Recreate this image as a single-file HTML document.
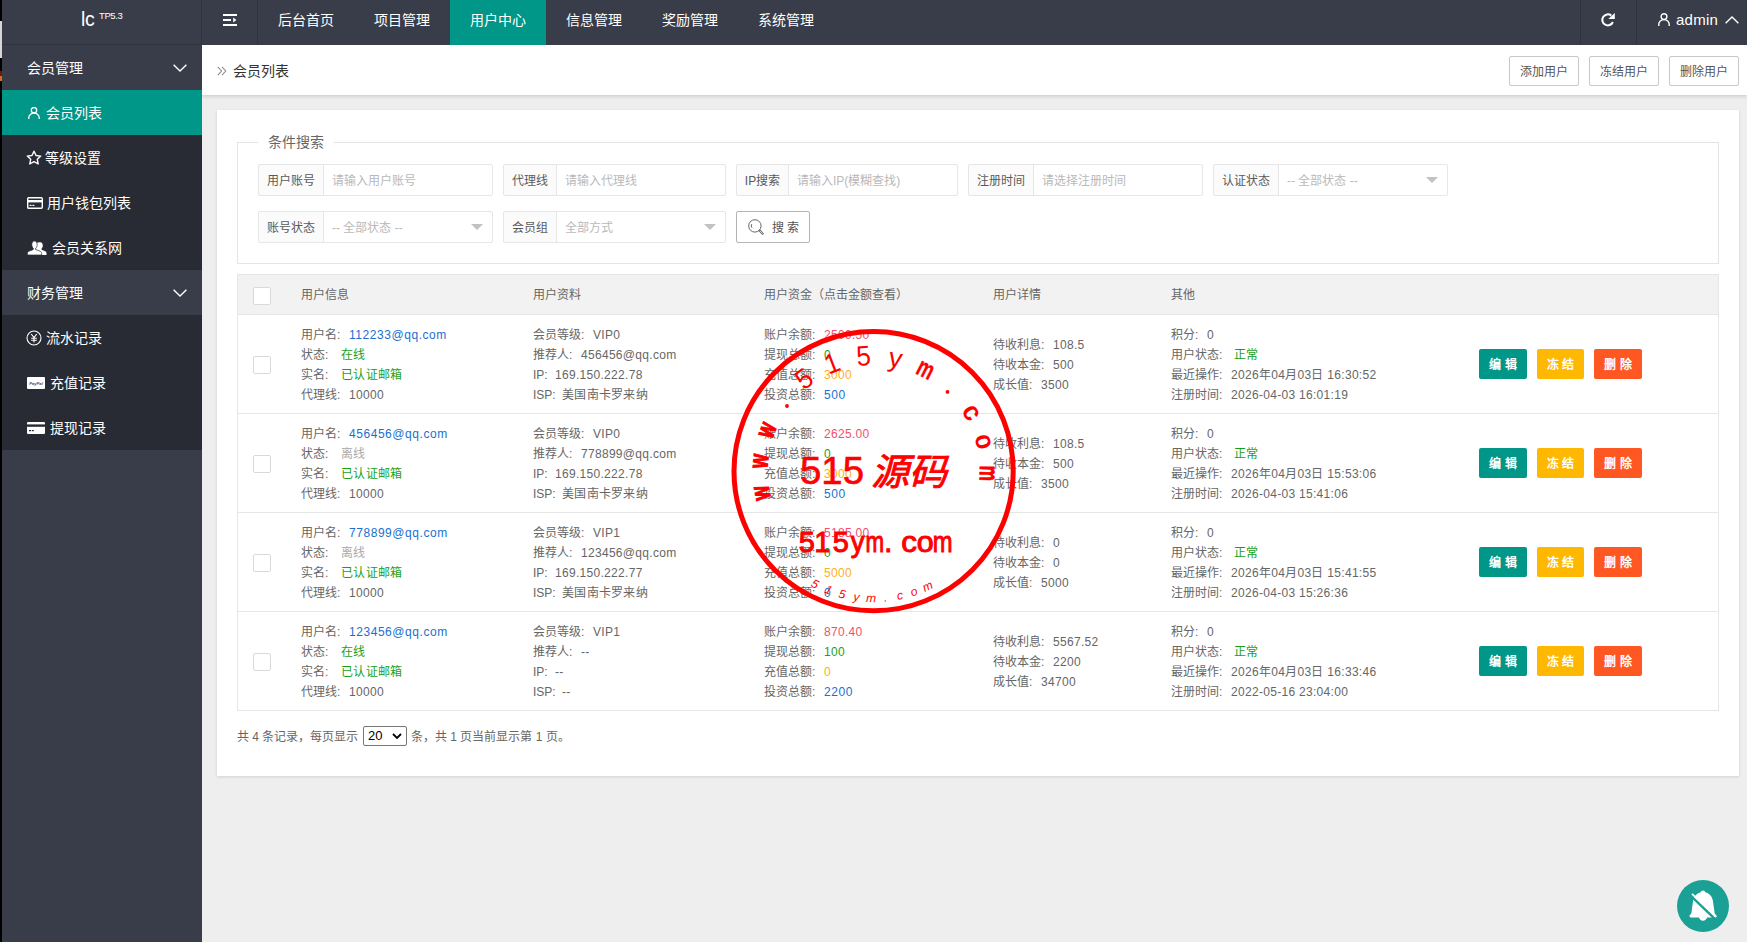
<!DOCTYPE html>
<html lang="zh-CN">
<head>
<meta charset="utf-8">
<title>会员列表</title>
<style>
*{box-sizing:border-box;margin:0;padding:0}
html,body{width:1747px;height:942px;overflow:hidden}
body{position:relative;background:#eeeeee;font-family:"Liberation Sans",sans-serif;font-size:12px;color:#666;line-height:20px}
.abs{position:absolute}
svg{display:block}
/* left window strip */
#strip{left:0;top:0;width:2px;height:942px;background:#000;z-index:50}
#strip i{position:absolute;left:0;width:2px;display:block}
/* header */
#hdr{left:0;top:0;width:1747px;height:45px;background:#393d49;color:#fff;z-index:10}
#logo{left:0;top:0;width:202px;height:45px;border-bottom:1px solid #30333d}
#logo .lc{position:absolute;left:81px;top:8.4px;font-size:19.400px;line-height:22px;color:#fff;letter-spacing:-.3px}
#logo .tp{position:absolute;left:99px;top:9.800px;font-size:9.500px;line-height:12px;color:#fff;letter-spacing:-.4px}
.vline{position:absolute;top:0;width:1px;height:45px;background:#30333d}
.nav{position:absolute;top:0;height:45px;width:96px;line-height:40px;font-size:14px;color:#fff;padding-left:20px;white-space:nowrap}
.nav.on{background:#009688}
#adm{left:1676px;top:9px;font-size:15px;line-height:22px;color:#fff;letter-spacing:.25px}
/* sidebar */
#side{left:0;top:45px;width:202px;height:897px;background:#393d49;z-index:9}
.sh{position:absolute;left:0;width:202px;height:45px;line-height:46px;font-size:14px;color:#fff;padding-left:27px;background:#393d49;white-space:nowrap}
.sub{position:absolute;left:0;width:202px;background:#282b33}
.si{position:absolute;left:0;width:202px;height:45px;line-height:46px;font-size:14px;color:#fff;white-space:nowrap}
.si.on{background:#009688}
.si span{position:absolute;top:0}
.si svg,.sh svg{position:absolute}
/* breadcrumb */
#crumb{left:202px;top:45px;width:1545px;height:50px;background:#fff;box-shadow:0 1px 4px rgba(0,0,0,.18);z-index:5}
#crumb .t{position:absolute;left:31px;top:15px;font-size:14px;line-height:22px;color:#333;white-space:nowrap}
.tb{position:absolute;top:11px;width:70px;height:30px;border:1px solid #c9c9c9;border-radius:2px;background:#fff;font-size:12px;line-height:30px;color:#555;text-align:center;white-space:nowrap}
/* card */
#card{left:217px;top:110px;width:1522px;height:666px;background:#fff;box-shadow:0 1px 3px rgba(0,0,0,.12);z-index:2}
#fs{left:20px;top:32px;width:1482px;height:122px;border:1px solid #e4e4e4}
#lg{left:41px;top:21px;width:76px;height:22px;background:#fff;font-size:14px;line-height:22px;color:#666;text-align:center;white-space:nowrap}
.grp{height:32px;border:1px solid #e6e6e6;border-radius:2px;background:#fff;overflow:hidden}
.gl{position:absolute;left:-1px;top:-1px;height:32px;border:1px solid #e6e6e6;border-radius:2px 0 0 2px;background:#fbfbfb;color:#5a5a5a;font-size:12px;line-height:32px;text-align:center;white-space:nowrap;overflow:hidden}
.gi{position:absolute;top:0;margin-left:7px;height:30px;line-height:33px;font-size:12px;color:#b9b9b9;white-space:nowrap}
.ar{position:absolute;right:9px;top:12px;width:0;height:0;border:6px solid transparent;border-top-color:#c2c2c2;border-bottom-width:0}
#sb{width:74px;height:32px;border:1px solid #b4b4b4;border-radius:2px;background:#fff;color:#555;font-size:12px;line-height:30px;white-space:nowrap}
#sb span{position:absolute;left:35px;top:1.4px}
#tb{width:1482px;border:1px solid #e6e6e6;border-bottom:0;background:#fff}
#th{position:relative;height:40px;background:#f2f2f2;border-bottom:1px solid #e6e6e6;color:#666;font-size:12px;line-height:40px}
#th span{position:absolute;top:0;white-space:nowrap}
.cb{position:absolute;display:block;width:18px;height:18px;border:1px solid #d9d9d9;border-radius:2px;background:#fff}
.tr{position:relative;height:99px;border-bottom:1px solid #e6e6e6}
.c{position:absolute;font-size:12px;line-height:20px;color:#666;white-space:nowrap}
.l{display:inline-block;font-weight:normal;white-space:nowrap}
.v{letter-spacing:.3px}.v.b{letter-spacing:.55px}
.v.b{color:#1a6fd0}.v.g{color:#1a9f1a}.v.x{color:#aaa}.v.r{color:#f0506e}.v.o{color:#ffb019}
.bt{position:absolute;top:34px;width:48px;height:30px;border-radius:2px;color:#fff;font-size:12px;font-weight:bold;line-height:32px;text-align:center;white-space:nowrap}
#pg{font-size:12px;line-height:20px;color:#666;white-space:nowrap;height:20px;width:400px}
#pg .p{position:absolute;top:0;white-space:nowrap}
#sel{display:block;position:absolute;left:126px;top:-1px;width:44px;height:20px;border:1px solid #767676;border-radius:2px;background:#fff;color:#000;font-size:13px;line-height:18px;padding-left:4px;text-align:left}
#sel svg{position:absolute;right:4px;top:6px}
</style>
</head>
<body>
<div id="strip" class="abs"><i style="top:21px;height:37px;background:#d6d6d6"></i><i style="top:71px;height:5px;background:#7a1010"></i><i style="top:76px;height:5px;background:#c8741c"></i></div>

<div id="hdr" class="abs">
  <div id="logo" class="abs"><span class="lc">lc</span><span class="tp">TP5.3</span></div>
  <div class="vline" style="left:201px"></div>
  <svg class="abs" style="left:223px;top:14px" width="14" height="12" viewBox="0 0 14 12"><path d="M0 1h14M0 6h8M0 11h14" stroke="#fff" stroke-width="1.8" fill="none"/><path d="M10.2 3.6L13.4 6l-3.2 2.4z" fill="#fff"/></svg>
  <div class="vline" style="left:257px"></div>
  <div class="nav" style="left:258px">后台首页</div>
  <div class="nav" style="left:354px">项目管理</div>
  <div class="nav on" style="left:450px">用户中心</div>
  <div class="nav" style="left:546px">信息管理</div>
  <div class="nav" style="left:642px">奖励管理</div>
  <div class="nav" style="left:738px">系统管理</div>
  <div class="vline" style="left:1580px"></div>
  <svg class="abs" style="left:1600px;top:12px" width="16" height="16" viewBox="0 0 16 16"><path d="M11.3 3.6A5.5 5.5 0 1 0 12.9 10" stroke="#fff" stroke-width="2" fill="none"/><path d="M14.8 1.1V7.100H8.300z" fill="#fff"/></svg>
  <div class="vline" style="left:1636px"></div>
  <svg class="abs" style="left:1658px;top:13px" width="12" height="13" viewBox="0 0 12 13"><circle cx="6" cy="3.6" r="2.9" stroke="#fff" stroke-width="1.4" fill="none"/><path d="M0.8 13V11.2A5.2 4.6 0 0 1 11.2 11.2V13" stroke="#fff" stroke-width="1.4" fill="none"/></svg>
  <div id="adm" class="abs">admin</div>
  <svg class="abs" style="left:1725px;top:16px" width="14" height="8" viewBox="0 0 14 8"><path d="M0.6 7.2L7 1l6.4 6.2" stroke="#fff" stroke-width="1.4" fill="none"/></svg>
</div>

<div id="side" class="abs">
  <div class="sh" style="top:0">会员管理<svg style="left:173px;top:19px" width="14" height="8" viewBox="0 0 14 8"><path d="M0.6 0.8L7 7l6.4-6.2" stroke="#fff" stroke-width="1.4" fill="none"/></svg></div>
  <div class="sub" style="top:45px;height:180px">
    <div class="si on" style="top:0"><svg style="left:28px;top:17px" width="12" height="12" viewBox="0 0 12 12"><circle cx="6" cy="3.3" r="2.7" stroke="#fff" stroke-width="1.3" fill="none"/><path d="M0.8 12V10.6A5.2 4.4 0 0 1 11.2 10.6V12" stroke="#fff" stroke-width="1.3" fill="none"/></svg><span style="left:46px">会员列表</span></div>
    <div class="si" style="top:45px"><svg style="left:26px;top:15px" width="16" height="15" viewBox="0 0 16 15"><path d="M8 1.2l2.05 4.3 4.7.6-3.45 3.25.9 4.65L8 11.7l-4.2 2.3.9-4.65L1.25 6.1l4.7-.6z" stroke="#fff" stroke-width="1.4" stroke-linejoin="round" fill="none"/></svg><span style="left:45px">等级设置</span></div>
    <div class="si" style="top:90px"><svg style="left:27px;top:17px" width="16" height="12" viewBox="0 0 16 12"><rect x="0.7" y="0.7" width="14.6" height="10.6" rx="1" stroke="#fff" stroke-width="1.4" fill="none"/><rect x="0.7" y="3" width="14.6" height="2.4" fill="#fff"/><rect x="2.6" y="7.8" width="2" height="1.2" fill="#fff"/><rect x="5.4" y="7.8" width="2" height="1.2" fill="#fff"/></svg><span style="left:47px">用户钱包列表</span></div>
    <div class="si" style="top:135px"><svg style="left:27px;top:15px" width="20" height="16" viewBox="0 0 20 16"><path d="M13.4 2.2c1.5 0 2.4 1.3 2.4 3.2 0 1.300-.5 2.500-1.200 3.200v1.200l3.500 1.500c.9.400 1.400 1.100 1.400 2v1.700H9V3c1-.5 2.800-.8 4.400-.8z" fill="#fff"/><path d="M7.400 1c1.700 0 2.800 1.500 2.800 3.600 0 1.500-.6 2.900-1.500 3.700v1.200l4.300 1.700c1 .4 1.600 1.200 1.600 2.200V15H.4v-1.600c0-1 .6-1.800 1.600-2.200l4.300-1.700V8.300C5.400 7.500 4.800 6.100 4.800 4.600 4.800 2.500 5.800 1 7.400 1z" fill="#fff" stroke="#282b33" stroke-width=".7"/></svg><span style="left:52px">会员关系网</span></div>
  </div>
  <div class="sh" style="top:225px">财务管理<svg style="left:173px;top:19px" width="14" height="8" viewBox="0 0 14 8"><path d="M0.6 0.8L7 7l6.4-6.2" stroke="#fff" stroke-width="1.4" fill="none"/></svg></div>
  <div class="sub" style="top:270px;height:135px">
    <div class="si" style="top:0"><svg style="left:26px;top:15px" width="16" height="16" viewBox="0 0 16 16"><circle cx="8" cy="8" r="7" stroke="#fff" stroke-width="1.1" fill="none"/><path d="M5.2 4L8 7.6 10.8 4M8 7.6V12.4M5.2 8.2h5.6M5.2 10.2h5.6" stroke="#fff" stroke-width="1.1" fill="none"/></svg><span style="left:46px">流水记录</span></div>
    <div class="si" style="top:45px"><svg style="left:27px;top:17px" width="18" height="12" viewBox="0 0 18 12"><rect width="18" height="12" rx="1" fill="#fff"/><text x="9" y="7.6" font-family="Liberation Sans, sans-serif" font-size="4.2" font-style="italic" font-weight="bold" fill="#3a4a8c" text-anchor="middle">PayPal</text></svg><span style="left:50px">充值记录</span></div>
    <div class="si" style="top:90px"><svg style="left:27px;top:17px" width="18" height="12" viewBox="0 0 18 12"><rect width="18" height="12" rx="1" fill="#fff"/><rect x="0" y="2.4" width="18" height="2.4" fill="#282b33"/><rect x="2" y="8" width="2" height="1.2" fill="#282b33"/><rect x="4.8" y="8" width="2" height="1.2" fill="#282b33"/></svg><span style="left:50px">提现记录</span></div>
  </div>
</div>

<div id="crumb" class="abs">
  <svg class="abs" style="left:15px;top:21px" width="10" height="10" viewBox="0 0 10 10"><path d="M0.800 0.800L4.600 5 0.800 9.200M5 0.800L8.800 5 5 9.200" stroke="#8c8c8c" stroke-width="1.100" fill="none"/></svg>
  <div class="t">会员列表</div>
  <div class="tb" style="left:1307px">添加用户</div>
  <div class="tb" style="left:1387px">冻结用户</div>
  <div class="tb" style="left:1467px">删除用户</div>
</div>

<!--CARD-START-->
<div id="card" class="abs">
<div id="fs" class="abs"></div><div id="lg" class="abs">条件搜索</div>
<div class="grp abs" style="left:41px;top:54px;width:235px"><div class="gl" style="width:66px">用户账号</div><div class="gi" style="left:66px">请输入用户账号</div></div>
<div class="grp abs" style="left:286px;top:54px;width:223px"><div class="gl" style="width:54px">代理线</div><div class="gi" style="left:54px">请输入代理线</div></div>
<div class="grp abs" style="left:519px;top:54px;width:222px"><div class="gl" style="width:53px">IP搜索</div><div class="gi" style="left:53px">请输入IP(模糊查找)</div></div>
<div class="grp abs" style="left:751px;top:54px;width:235px"><div class="gl" style="width:66px">注册时间</div><div class="gi" style="left:66px">请选择注册时间</div></div>
<div class="grp abs" style="left:996px;top:54px;width:235px"><div class="gl" style="width:66px">认证状态</div><div class="gi" style="left:66px">-- 全部状态 --</div><i class="ar"></i></div>
<div class="grp abs" style="left:41px;top:101px;width:235px"><div class="gl" style="width:66px">账号状态</div><div class="gi" style="left:66px">-- 全部状态 --</div><i class="ar"></i></div>
<div class="grp abs" style="left:286px;top:101px;width:223px"><div class="gl" style="width:54px">会员组</div><div class="gi" style="left:54px">全部方式</div><i class="ar"></i></div>
<div id="sb" class="abs" style="left:519px;top:101px"><svg width="17" height="17" viewBox="0 0 17 17" style="position:absolute;left:11px;top:6.5px"><circle cx="6.9" cy="6.9" r="6.2" stroke="#666" stroke-width="1" fill="none"/><path d="M3.6 5.2A3.4 3.4 0 0 0 3.9 8.6" stroke="#666" stroke-width="1" fill="none"/><path d="M11.6 11.6l3 3.100" stroke="#666" stroke-width="2.200" stroke-linecap="round" fill="none"/><path d="M12 12l2.400 2.500" stroke="#fff" stroke-width=".7" stroke-linecap="round" fill="none"/></svg><span>搜 索</span></div>
<div id="tb" class="abs" style="left:20px;top:164px">
<div id="th"><i class="cb" style="left:15px;top:12px"></i><span style="left:63px">用户信息</span><span style="left:295px">用户资料</span><span style="left:526px">用户资金（点击金额查看）</span><span style="left:755px">用户详情</span><span style="left:933px">其他</span></div>
<div class="tr"><i class="cb" style="left:15px;top:41px"></i>
<div class="c" style="left:63px;top:10px"><b class="l" style="width:48px">用户名:</b><span class="v b">112233@qq.com</span><br><b class="l" style="width:40px">状态:</b><span class="v g">在线</span><br><b class="l" style="width:40px">实名:</b><span class="v g">已认证邮箱</span><br><b class="l" style="width:48px">代理线:</b><span class="v">10000</span></div>
<div class="c" style="left:295px;top:10px"><b class="l" style="width:60px">会员等级:</b><span class="v">VIP0</span><br><b class="l" style="width:48px">推荐人:</b><span class="v">456456@qq.com</span><br><b class="l" style="width:22px">IP:</b><span class="v">169.150.222.78</span><br><b class="l" style="width:29px">ISP:</b><span class="v">美国南卡罗来纳</span></div>
<div class="c" style="left:526px;top:10px"><b class="l" style="width:60px">账户余额:</b><span class="v r">2509.50</span><br><b class="l" style="width:60px">提现总额:</b><span class="v g">0</span><br><b class="l" style="width:60px">充值总额:</b><span class="v o">3000</span><br><b class="l" style="width:60px">投资总额:</b><span class="v b">500</span></div>
<div class="c" style="left:755px;top:20px"><b class="l" style="width:60px">待收利息:</b><span class="v">108.5</span><br><b class="l" style="width:60px">待收本金:</b><span class="v">500</span><br><b class="l" style="width:48px">成长值:</b><span class="v">3500</span></div>
<div class="c" style="left:933px;top:10px"><b class="l" style="width:36px">积分:</b><span class="v">0</span><br><b class="l" style="width:63px">用户状态:</b><span class="v g">正常</span><br><b class="l" style="width:60px">最近操作:</b><span class="v">2026年04月03日 16:30:52</span><br><b class="l" style="width:60px">注册时间:</b><span class="v">2026-04-03 16:01:19</span></div>
<div class="bt" style="left:1241px;background:#009688">编 辑</div><div class="bt" style="left:1299px;width:47px;background:#ffb800">冻 结</div><div class="bt" style="left:1356px;background:#ff5722">删 除</div>
</div>
<div class="tr"><i class="cb" style="left:15px;top:41px"></i>
<div class="c" style="left:63px;top:10px"><b class="l" style="width:48px">用户名:</b><span class="v b">456456@qq.com</span><br><b class="l" style="width:40px">状态:</b><span class="v x">离线</span><br><b class="l" style="width:40px">实名:</b><span class="v g">已认证邮箱</span><br><b class="l" style="width:48px">代理线:</b><span class="v">10000</span></div>
<div class="c" style="left:295px;top:10px"><b class="l" style="width:60px">会员等级:</b><span class="v">VIP0</span><br><b class="l" style="width:48px">推荐人:</b><span class="v">778899@qq.com</span><br><b class="l" style="width:22px">IP:</b><span class="v">169.150.222.78</span><br><b class="l" style="width:29px">ISP:</b><span class="v">美国南卡罗来纳</span></div>
<div class="c" style="left:526px;top:10px"><b class="l" style="width:60px">账户余额:</b><span class="v r">2625.00</span><br><b class="l" style="width:60px">提现总额:</b><span class="v g">0</span><br><b class="l" style="width:60px">充值总额:</b><span class="v o">3000</span><br><b class="l" style="width:60px">投资总额:</b><span class="v b">500</span></div>
<div class="c" style="left:755px;top:20px"><b class="l" style="width:60px">待收利息:</b><span class="v">108.5</span><br><b class="l" style="width:60px">待收本金:</b><span class="v">500</span><br><b class="l" style="width:48px">成长值:</b><span class="v">3500</span></div>
<div class="c" style="left:933px;top:10px"><b class="l" style="width:36px">积分:</b><span class="v">0</span><br><b class="l" style="width:63px">用户状态:</b><span class="v g">正常</span><br><b class="l" style="width:60px">最近操作:</b><span class="v">2026年04月03日 15:53:06</span><br><b class="l" style="width:60px">注册时间:</b><span class="v">2026-04-03 15:41:06</span></div>
<div class="bt" style="left:1241px;background:#009688">编 辑</div><div class="bt" style="left:1299px;width:47px;background:#ffb800">冻 结</div><div class="bt" style="left:1356px;background:#ff5722">删 除</div>
</div>
<div class="tr"><i class="cb" style="left:15px;top:41px"></i>
<div class="c" style="left:63px;top:10px"><b class="l" style="width:48px">用户名:</b><span class="v b">778899@qq.com</span><br><b class="l" style="width:40px">状态:</b><span class="v x">离线</span><br><b class="l" style="width:40px">实名:</b><span class="v g">已认证邮箱</span><br><b class="l" style="width:48px">代理线:</b><span class="v">10000</span></div>
<div class="c" style="left:295px;top:10px"><b class="l" style="width:60px">会员等级:</b><span class="v">VIP1</span><br><b class="l" style="width:48px">推荐人:</b><span class="v">123456@qq.com</span><br><b class="l" style="width:22px">IP:</b><span class="v">169.150.222.77</span><br><b class="l" style="width:29px">ISP:</b><span class="v">美国南卡罗来纳</span></div>
<div class="c" style="left:526px;top:10px"><b class="l" style="width:60px">账户余额:</b><span class="v r">5185.00</span><br><b class="l" style="width:60px">提现总额:</b><span class="v g">0</span><br><b class="l" style="width:60px">充值总额:</b><span class="v o">5000</span><br><b class="l" style="width:60px">投资总额:</b><span class="v b">0</span></div>
<div class="c" style="left:755px;top:20px"><b class="l" style="width:60px">待收利息:</b><span class="v">0</span><br><b class="l" style="width:60px">待收本金:</b><span class="v">0</span><br><b class="l" style="width:48px">成长值:</b><span class="v">5000</span></div>
<div class="c" style="left:933px;top:10px"><b class="l" style="width:36px">积分:</b><span class="v">0</span><br><b class="l" style="width:63px">用户状态:</b><span class="v g">正常</span><br><b class="l" style="width:60px">最近操作:</b><span class="v">2026年04月03日 15:41:55</span><br><b class="l" style="width:60px">注册时间:</b><span class="v">2026-04-03 15:26:36</span></div>
<div class="bt" style="left:1241px;background:#009688">编 辑</div><div class="bt" style="left:1299px;width:47px;background:#ffb800">冻 结</div><div class="bt" style="left:1356px;background:#ff5722">删 除</div>
</div>
<div class="tr"><i class="cb" style="left:15px;top:41px"></i>
<div class="c" style="left:63px;top:10px"><b class="l" style="width:48px">用户名:</b><span class="v b">123456@qq.com</span><br><b class="l" style="width:40px">状态:</b><span class="v g">在线</span><br><b class="l" style="width:40px">实名:</b><span class="v g">已认证邮箱</span><br><b class="l" style="width:48px">代理线:</b><span class="v">10000</span></div>
<div class="c" style="left:295px;top:10px"><b class="l" style="width:60px">会员等级:</b><span class="v">VIP1</span><br><b class="l" style="width:48px">推荐人:</b><span class="v">--</span><br><b class="l" style="width:22px">IP:</b><span class="v">--</span><br><b class="l" style="width:29px">ISP:</b><span class="v">--</span></div>
<div class="c" style="left:526px;top:10px"><b class="l" style="width:60px">账户余额:</b><span class="v r">870.40</span><br><b class="l" style="width:60px">提现总额:</b><span class="v g">100</span><br><b class="l" style="width:60px">充值总额:</b><span class="v o">0</span><br><b class="l" style="width:60px">投资总额:</b><span class="v b">2200</span></div>
<div class="c" style="left:755px;top:20px"><b class="l" style="width:60px">待收利息:</b><span class="v">5567.52</span><br><b class="l" style="width:60px">待收本金:</b><span class="v">2200</span><br><b class="l" style="width:48px">成长值:</b><span class="v">34700</span></div>
<div class="c" style="left:933px;top:10px"><b class="l" style="width:36px">积分:</b><span class="v">0</span><br><b class="l" style="width:63px">用户状态:</b><span class="v g">正常</span><br><b class="l" style="width:60px">最近操作:</b><span class="v">2026年04月03日 16:33:46</span><br><b class="l" style="width:60px">注册时间:</b><span class="v">2022-05-16 23:04:00</span></div>
<div class="bt" style="left:1241px;background:#009688">编 辑</div><div class="bt" style="left:1299px;width:47px;background:#ffb800">冻 结</div><div class="bt" style="left:1356px;background:#ff5722">删 除</div>
</div>
</div>
<div id="pg" class="abs" style="left:20px;top:617px"><span class="p" style="left:0">共 4 条记录，每页显示</span><span id="sel">20<svg width="10" height="6" viewBox="0 0 10 6"><path d="M1 1l4 4 4-4" stroke="#000" stroke-width="1.8" fill="none"/></svg></span><span class="p" style="left:174px">条，共 1 页当前显示第 1 页。</span></div>
</div>
<!--CARD-END-->

<!--STAMP-START-->
<svg id="stamp" class="abs" style="left:723px;top:321px;z-index:20" width="300" height="300" viewBox="723 321 300 300" font-family="Liberation Sans, sans-serif" fill="#ff0000">
<circle cx="873.6" cy="471.2" r="139.6" fill="none" stroke="#ff0000" stroke-width="5"/>
<text font-size="27" font-weight="bold" stroke="#ff0000" stroke-width="1.3" text-anchor="middle" transform="translate(769.4 491.5) rotate(-101.0) scale(0.66 1)">w</text>
<text font-size="27" font-weight="bold" stroke="#ff0000" stroke-width="1.3" text-anchor="middle" transform="translate(767.8 461.9) rotate(-85.0) scale(0.66 1)">w</text>
<text font-size="27" font-weight="bold" stroke="#ff0000" stroke-width="1.3" text-anchor="middle" transform="translate(774.5 433.1) rotate(-69.0) scale(0.66 1)">w</text>
<circle cx="787.0" cy="406.0" r="1.9"/>
<text font-size="28" font-weight="normal" text-anchor="middle" transform="translate(809.7 386.4) rotate(-37.0) scale(0.92 1)">5</text>
<text font-size="28" font-weight="normal" text-anchor="middle" transform="translate(835.5 372.1) rotate(-21.0) scale(0.92 1)">1</text>
<text font-size="28" font-weight="normal" text-anchor="middle" transform="translate(864.3 365.4) rotate(-5.0) scale(0.92 1)">5</text>
<text font-size="27" font-weight="normal" text-anchor="middle" transform="translate(893.9 367.0) rotate(11.0) scale(1.0 1)">y</text>
<text font-size="27" font-weight="bold" stroke="#ff0000" stroke-width="0.3" text-anchor="middle" transform="translate(921.8 376.6) rotate(27.0) scale(0.68 1)">m</text>
<circle cx="947.5" cy="391.9" r="1.9"/>
<text font-size="27" font-weight="bold" text-anchor="middle" transform="translate(964.6 416.5) rotate(59.0) scale(0.95 1)">c</text>
<text font-size="27" font-weight="bold" text-anchor="middle" transform="translate(976.2 443.7) rotate(75.0) scale(0.9 1)">o</text>
<text font-size="27" font-weight="bold" stroke="#ff0000" stroke-width="0.9" text-anchor="middle" transform="translate(979.8 473.1) rotate(91.0) scale(0.64 1)">m</text>
<text x="800" y="484" font-size="38" stroke="#ff0000" stroke-width=".6" textLength="64" lengthAdjust="spacingAndGlyphs">515</text>
<text x="871" y="485" font-size="37" font-family="Liberation Serif, serif" font-style="italic" stroke="#ff0000" stroke-width=".9" textLength="76" lengthAdjust="spacingAndGlyphs">源码</text>
<text font-size="29" stroke="#ff0000" stroke-width="1" text-anchor="middle" transform="translate(806.8 551.6) scale(1.0 1)">5</text>
<text font-size="29" stroke="#ff0000" stroke-width="1" text-anchor="middle" transform="translate(822.4 551.6) scale(1.0 1)">1</text>
<text font-size="29" stroke="#ff0000" stroke-width="1" text-anchor="middle" transform="translate(840.7 551.6) scale(1.0 1)">5</text>
<text font-size="29" stroke="#ff0000" stroke-width="1" text-anchor="middle" transform="translate(857.6 551.6) scale(0.95 1)">y</text>
<text font-size="29" stroke="#ff0000" stroke-width="1" text-anchor="middle" transform="translate(874.7 551.6) scale(0.77 1)">m</text>
<text font-size="29" stroke="#ff0000" stroke-width="1" text-anchor="middle" transform="translate(888.2 551.6) scale(1.0 1)">.</text>
<text font-size="29" stroke="#ff0000" stroke-width="1" text-anchor="middle" transform="translate(909.2 551.6) scale(1.08 1)">c</text>
<text font-size="29" stroke="#ff0000" stroke-width="1" text-anchor="middle" transform="translate(925.3 551.6) scale(1.05 1)">o</text>
<text font-size="29" stroke="#ff0000" stroke-width="1" text-anchor="middle" transform="translate(942.6 551.6) scale(0.82 1)">m</text>
<text x="813.3" y="587.5" font-size="12" font-style="italic" text-anchor="middle" transform="rotate(27.4 813.3 587.5)">5</text>
<text x="827.0" y="593.6" font-size="12" font-style="italic" text-anchor="middle" transform="rotate(20.8 827.0 593.6)">1</text>
<text x="841.3" y="598.2" font-size="12" font-style="italic" text-anchor="middle" transform="rotate(14.3 841.3 598.2)">5</text>
<text x="856.0" y="601.0" font-size="12" font-style="italic" text-anchor="middle" transform="rotate(7.7 856.0 601.0)">y</text>
<text x="871.0" y="602.2" font-size="12" font-style="italic" text-anchor="middle" transform="rotate(1.2 871.0 602.2)">m</text>
<text x="886.0" y="601.6" font-size="12" font-style="italic" text-anchor="middle" transform="rotate(-5.4 886.0 601.6)">.</text>
<text x="900.8" y="599.3" font-size="12" font-style="italic" text-anchor="middle" transform="rotate(-12.0 900.8 599.3)">c</text>
<text x="915.2" y="595.4" font-size="12" font-style="italic" text-anchor="middle" transform="rotate(-18.5 915.2 595.4)">o</text>
<text x="929.2" y="589.8" font-size="12" font-style="italic" text-anchor="middle" transform="rotate(-25.1 929.2 589.8)">m</text>
</svg>
<svg id="bell" class="abs" style="left:1677px;top:880px;z-index:20" width="52" height="52" viewBox="0 0 52 52"><circle cx="26" cy="26" r="26" fill="#1aa094"/><path d="M26 10.4c1.2 0 2.1.8 2.3 1.9 4.3 1 7.2 4.6 7.7 9.2l1.6 11.4c.2.6.5 1 1 1.5l.5.5c.9.9.3 2.5-1 2.5H30c-.4 1.9-2 3.3-4 3.3s-3.600-1.400-4-3.300H13.900c-1.300 0-1.900-1.600-1-2.500l.5-.5c.5-.5.8-.9 1-1.500l1.600-11.400c.5-4.600 3.400-8.200 7.700-9.200.2-1.100 1.100-1.900 2.300-1.900z" fill="#fff"/><path d="M13.400 15.400L37.600 38.600" stroke="#1aa094" stroke-width="2.400" fill="none"/><path d="M15 13.800L39.200 37" stroke="#fff" stroke-width="1.700" fill="none"/></svg>
<!--STAMP-END-->
</body>
</html>
